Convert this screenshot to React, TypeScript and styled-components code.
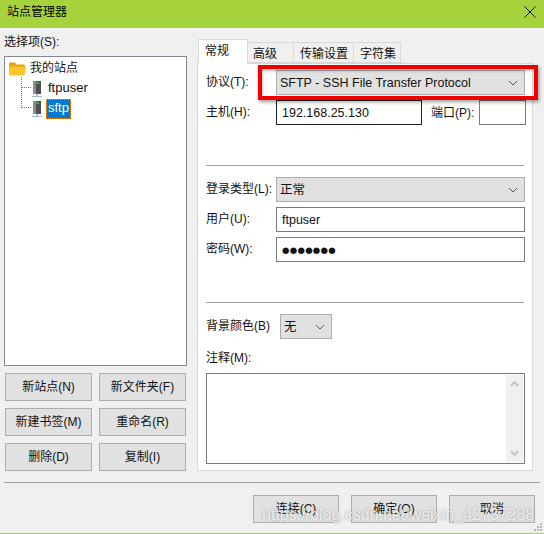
import React from "react";
import styled, { createGlobalStyle } from "styled-components";

const Global = createGlobalStyle`
  html, body { margin: 0; padding: 0; background: #f0f0f0; }
  * { box-sizing: border-box; }
`;

const Window = styled.div`
  position: relative;
  width: 544px;
  height: 534px;
  overflow: hidden;
  background: #f0f0f0;
  border-bottom: 1px solid #a6d43c;
  display: flex;
  flex-direction: column;
  font: 12px/16px "Liberation Sans", "Noto Sans CJK SC", sans-serif;
  color: #111;
`;

const TitleBar = styled.div`
  height: 28px;
  flex: none;
  background: #a6d33b;
  display: flex;
  align-items: center;
  justify-content: space-between;
  padding: 0 8px 4px 7px;
  font-size: 12px;
  color: #000;
`;

const Main = styled.div`
  height: 443px;
  flex: none;
  display: flex;
  padding: 5px 11px 0 4px;
`;

const LeftColumn = styled.div`
  width: 183px;
  flex: none;
  display: flex;
  flex-direction: column;
`;

const ListLabel = styled.div`
  height: 23px;
  padding-top: 1px;
`;

const TreeBox = styled.div`
  height: 310px;
  flex: none;
  background: #fff;
  border: 1px solid #828790;
  padding: 2px 0 0 4px;
`;

const TreeRow = styled.div<{ $child?: boolean }>`
  position: relative;
  height: 20px;
  display: flex;
  align-items: center;
  padding-left: ${(p) => (p.$child ? "23px" : "0")};
`;

const Connector = styled.span<{ $tall?: boolean }>`
  position: absolute;
  left: 12px;
  top: ${(p) => (p.$tall ? "-10px" : "-2px")};
  width: 10px;
  height: ${(p) => (p.$tall ? "19px" : "11px")};
  border-left: 1px dotted #777;
  border-bottom: 1px dotted #777;
`;

const RootLabel = styled.span`
  margin-left: 4px;
  height: 20px;
  line-height: 18px;
  font-size: 12px;
`;

const TreeLabel = styled.span<{ $selected?: boolean }>`
  margin-left: ${(p) => (p.$selected ? "4px" : "6px")};
  padding: 0 ${(p) => (p.$selected ? "2px" : "0")};
  height: 20px;
  line-height: 18px;
  color: ${(p) => (p.$selected ? "#fff" : "#111")};
  background: ${(p) => (p.$selected ? "#0078d7" : "transparent")};
  outline: ${(p) => (p.$selected ? "1px dotted #ff9a1f" : "none")};
  outline-offset: -1px;
  font-size: 13px;
`;

const ButtonGrid = styled.div`
  margin-top: 7px;
  padding-left: 1px;
  display: grid;
  grid-template-columns: 87px 87px;
  grid-auto-rows: 28px;
  column-gap: 7px;
  row-gap: 7px;
`;

const Button = styled.div`
  display: flex;
  align-items: center;
  justify-content: center;
  background: #e1e1e1;
  border: 1px solid #adadad;
  font-size: 12px;
  color: #111;
`;

const RightColumn = styled.div`
  margin-left: 10px;
  width: 336px;
  flex: none;
  display: flex;
  flex-direction: column;
  padding-top: 6px;
`;

const Tabs = styled.div`
  height: 24px;
  flex: none;
  display: flex;
  align-items: flex-end;
  padding-left: 1px;
  position: relative;
  z-index: 1;
`;

const Tab = styled.div<{ $active?: boolean; $w: number; $pl: number }>`
  width: ${(p) => p.$w}px;
  height: ${(p) => (p.$active ? "25px" : "21px")};
  margin-bottom: ${(p) => (p.$active ? "-1px" : "0")};
  background: ${(p) => (p.$active ? "#fff" : "#f0f0f0")};
  border: 1px solid #d9d9d9;
  border-bottom: ${(p) => (p.$active ? "none" : "1px solid #d9d9d9")};
  border-left: ${(p) => (p.$active ? "1px solid #d9d9d9" : "none")};
  display: flex;
  align-items: center;
  padding: ${(p) => (p.$active ? `0 0 3px ${p.$pl}px` : `2px 0 0 ${p.$pl}px`)};
`;

const Panel = styled.div`
  height: 408px;
  flex: none;
  background: #fff;
  border: 1px solid #d9d9d9;
  padding: 6px 7px 0 8px;
  display: flex;
  flex-direction: column;
`;

const Row = styled.div<{ $h: number; $mt?: number }>`
  height: ${(p) => p.$h}px;
  margin-top: ${(p) => p.$mt ?? 0}px;
  flex: none;
  display: flex;
  align-items: center;
`;

const FieldLabel = styled.div<{ $w?: number }>`
  width: ${(p) => p.$w ?? 70}px;
  flex: none;
  white-space: nowrap;
  padding-bottom: 2px;
`;

const Select = styled.div<{ $w?: number }>`
  ${(p) => (p.$w ? `width: ${p.$w}px;` : "flex: 1;")}
  height: 100%;
  display: flex;
  align-items: center;
  justify-content: space-between;
  background: #e1e1e1;
  border: 1px solid #adadad;
  padding: 0 6px 0 3px;
  font-size: 12.5px;
`;

const Input = styled.div<{ $w?: number; $dark?: boolean }>`
  ${(p) => (p.$w ? `width: ${p.$w}px; flex: none;` : "flex: 1;")}
  height: 100%;
  display: flex;
  align-items: center;
  background: #fff;
  border: 1px solid ${(p) => (p.$dark ? "#222" : "#7a7a7a")};
  padding: 0 5px;
  font-size: 12.5px;
`;

const Divider = styled.div<{ $mt: number }>`
  height: 1px;
  flex: none;
  margin-top: ${(p) => p.$mt}px;
  margin-right: 1px;
  background: #a0a0a0;
`;

const PortLabel = styled.div`
  width: 48px;
  margin-left: 9px;
  flex: none;
  white-space: nowrap;
`;

const NotesBox = styled.div`
  height: 91px;
  flex: none;
  margin-top: 6px;
  background: #fff;
  border: 1px solid #7a7a7a;
  display: flex;
  justify-content: flex-end;
  padding: 1px;
`;

const ScrollTrack = styled.div`
  width: 17px;
  background: #f0f0f0;
  display: flex;
  flex-direction: column;
  justify-content: space-between;
  align-items: center;
  padding: 6px 0;
`;

const Footer = styled.div`
  flex: none;
  margin: 11px 4px 0;
  border-top: 1px solid #a0a0a0;
  padding: 12px 5px 0 0;
  display: flex;
  justify-content: flex-end;
  gap: 12px;
`;

const FooterButton = styled(Button)`
  width: 86px;
  height: 28px;
`;

const Annotation = styled.div`
  position: absolute;
  left: 258px;
  top: 65px;
  width: 280px;
  height: 35px;
  border: 4px solid #ee0000;
  box-shadow: 1px 2px 4px rgba(0, 0, 0, 0.4), inset 1px 2px 3px rgba(0, 0, 0, 0.25);
`;

const Watermark = styled.div`
  position: absolute;
  left: 262px;
  top: 505px;
  font: 16px/20px "Liberation Sans", sans-serif;
  color: rgba(255, 255, 255, 0.8);
  text-shadow: 0 0 2px rgba(80, 80, 80, 0.55);
  white-space: nowrap;
`;

const Grip = styled.svg`
  position: absolute;
  right: 1px;
  bottom: 1px;
`;

const Dots = styled.span`
  font-size: 8.5px;
  letter-spacing: 0.3px;
  font-family: "DejaVu Sans", sans-serif;
`;

const Chevron = () => (
  <svg width="10" height="6" viewBox="0 0 10 6" fill="none">
    <path d="M1 1l4 4 4-4" stroke="#555" strokeWidth="1" />
  </svg>
);

const Folder = () => (
  <svg width="17" height="14" viewBox="0 0 17 14">
    <path d="M0 1.5Q0 .5 1 .5h5l1.5 2H15q1 0 1 1V6H0z" fill="#e5a50f" />
    <path d="M0 6l1-1.5h15L17 6l-1.5 7q0 .6-1 .6H1q-1 0-1-1z" fill="#fbc62b" />
  </svg>
);

const Server = () => (
  <svg width="10" height="17" viewBox="0 0 10 17">
    <rect x="1" y="0" width="8" height="13" fill="#4d4f50" />
    <rect x="1" y="0" width="3" height="13" fill="#8c8e8f" />
    <rect x="3" y="1" width="4" height="2" fill="#35b04a" />
    <rect x="4.5" y="12" width="1" height="3" fill="#3f8fd8" />
    <rect x="0" y="15" width="10" height="1" fill="#9bb7d0" />
  </svg>
);

const Close = () => (
  <svg width="12" height="12" viewBox="0 0 12 12" fill="none">
    <path d="M.5.5l11 11M11.5.5l-11 11" stroke="#111" strokeWidth="1" />
  </svg>
);

const Arrow = ({ up }: { up?: boolean }) => (
  <svg width="9" height="6" viewBox="0 0 9 6" fill="none">
    <path d={up ? "M1 5l3.5-4L8 5" : "M1 1l3.5 4L8 1"} stroke="#c4c4c4" strokeWidth="2" />
  </svg>
);

export default function App() {
  return (
    <>
      <Global />
      <Window>
        <TitleBar>
          <span>站点管理器</span>
          <Close />
        </TitleBar>
        <Main>
          <LeftColumn>
            <ListLabel>选择项(S):</ListLabel>
            <TreeBox>
              <TreeRow>
                <Folder />
                <RootLabel>我的站点</RootLabel>
              </TreeRow>
              <TreeRow $child>
                <Connector />
                <Server />
                <TreeLabel>ftpuser</TreeLabel>
              </TreeRow>
              <TreeRow $child>
                <Connector $tall />
                <Server />
                <TreeLabel $selected>sftp</TreeLabel>
              </TreeRow>
            </TreeBox>
            <ButtonGrid>
              <Button>新站点(N)</Button>
              <Button>新文件夹(F)</Button>
              <Button>新建书签(M)</Button>
              <Button>重命名(R)</Button>
              <Button>删除(D)</Button>
              <Button>复制(I)</Button>
            </ButtonGrid>
          </LeftColumn>
          <RightColumn>
            <Tabs>
              <Tab $active $w={50} $pl={6}>常规</Tab>
              <Tab $w={46} $pl={5}>高级</Tab>
              <Tab $w={60} $pl={6}>传输设置</Tab>
              <Tab $w={47} $pl={6}>字符集</Tab>
            </Tabs>
            <Panel>
              <Row $h={25}>
                <FieldLabel>协议(T):</FieldLabel>
                <Select>
                  SFTP - SSH File Transfer Protocol
                  <Chevron />
                </Select>
              </Row>
              <Row $h={25} $mt={5}>
                <FieldLabel>主机(H):</FieldLabel>
                <Input $w={146} $dark>192.168.25.130</Input>
                <PortLabel>端口(P):</PortLabel>
                <Input $w={47} />
              </Row>
              <Divider $mt={40} />
              <Row $h={25} $mt={11}>
                <FieldLabel>登录类型(L):</FieldLabel>
                <Select>
                  正常
                  <Chevron />
                </Select>
              </Row>
              <Row $h={25} $mt={5}>
                <FieldLabel>用户(U):</FieldLabel>
                <Input>ftpuser</Input>
              </Row>
              <Row $h={25} $mt={5}>
                <FieldLabel>密码(W):</FieldLabel>
                <Input><Dots>●●●●●●●</Dots></Input>
              </Row>
              <Divider $mt={40} />
              <Row $h={25} $mt={11}>
                <FieldLabel $w={74}>背景颜色(B)</FieldLabel>
                <Select $w={52}>
                  无
                  <Chevron />
                </Select>
              </Row>
              <Row $h={16} $mt={12}>
                <FieldLabel>注释(M):</FieldLabel>
              </Row>
              <NotesBox>
                <ScrollTrack>
                  <Arrow up />
                  <Arrow />
                </ScrollTrack>
              </NotesBox>
            </Panel>
          </RightColumn>
        </Main>
        <Footer>
          <FooterButton>连接(C)</FooterButton>
          <FooterButton>确定(O)</FooterButton>
          <FooterButton>取消</FooterButton>
        </Footer>
        <Annotation />
        <Watermark>https://blog.csdn.net/weixin_42737288</Watermark>
        <Grip width="10" height="10" viewBox="0 0 10 10" fill="#b5b5b5">
          <rect x="7" y="1" width="2" height="2" />
          <rect x="4" y="4" width="2" height="2" />
          <rect x="7" y="4" width="2" height="2" />
          <rect x="1" y="7" width="2" height="2" />
          <rect x="4" y="7" width="2" height="2" />
          <rect x="7" y="7" width="2" height="2" />
        </Grip>
      </Window>
    </>
  );
}
